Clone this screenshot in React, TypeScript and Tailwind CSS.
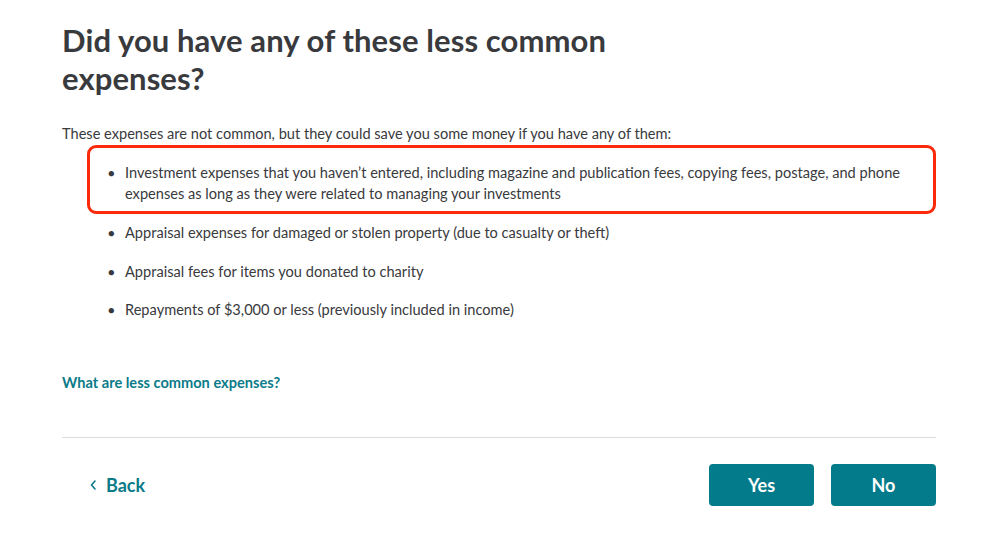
import React from "react";

const items = [
  "Appraisal expenses for damaged or stolen property (due to casualty or theft)",
  "Appraisal fees for items you donated to charity",
  "Repayments of $3,000 or less (previously included in income)",
];

export default function App() {
  return (
    <div
      className="w-[999px] h-[547px] bg-white text-[#393a3d] overflow-hidden"
      style={{ fontFamily: "Lato, 'Open Sans', sans-serif" }}
    >
      <div className="ml-[62px] w-[874px] pt-[21px]">
        <h1 className="text-[31px] leading-[38px] font-bold max-w-[600px] tracking-[0.1px]">
          Did you have any of these less common expenses?
        </h1>
        <p className="mt-[27px] text-[14.6px] leading-[20px]">
          These expenses are not common, but they could save you some money if you have any of them:
        </p>
        <div className="mt-px ml-[25px] border-[3px] border-[#fb2a0a] rounded-[9px] pt-[14px] pb-[7px] pl-[18px] pr-[10px]">
          <div className="flex text-[14.6px] leading-[21px]">
            <span className="w-[17px] shrink-0 text-[11px]">●</span>
            <span>
              Investment expenses that you haven’t entered, including magazine and publication fees, copying fees, postage, and phone expenses as long as they were related to managing your investments
            </span>
          </div>
        </div>
        <ul className="mt-[8px] ml-[46px] flex flex-col gap-[17.5px]">
          {items.map((t) => (
            <li key={t} className="flex text-[14.6px] leading-[21px]">
              <span className="w-[17px] shrink-0 text-[11px]">●</span>
              <span>{t}</span>
            </li>
          ))}
        </ul>
        <a className="block mt-[53px] text-[14.6px] leading-[20px] font-bold text-[#0b7b89]">
          What are less common expenses?
        </a>
        <div className="mt-[44px] h-px bg-[#dcdcdc]" />
        <div className="mt-[26px] flex items-center justify-between">
          <button className="ml-[27px] flex items-center gap-[9px] text-[#0b7b89] font-bold text-[18px]">
            <svg width="8" height="12" viewBox="0 0 8 12" fill="none">
              <path d="M6 2 L2.5 6 L6 10" stroke="#0b7b89" strokeWidth="1.6" strokeLinecap="round" strokeLinejoin="round" />
            </svg>
            Back
          </button>
          <div className="flex gap-[17px]">
            <button className="w-[105px] h-[42px] rounded-[4px] bg-[#047b8a] text-white font-bold text-[18px]">
              Yes
            </button>
            <button className="w-[105px] h-[42px] rounded-[4px] bg-[#047b8a] text-white font-bold text-[18px]">
              No
            </button>
          </div>
        </div>
      </div>
    </div>
  );
}
